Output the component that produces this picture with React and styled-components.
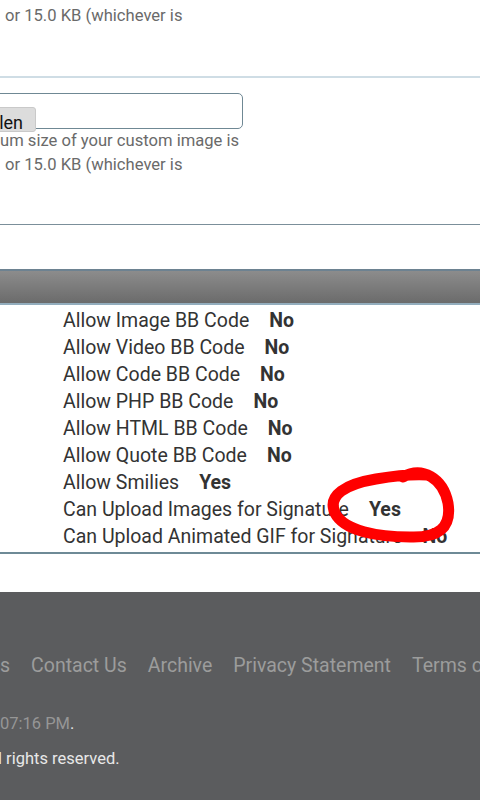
import React from "react";
import styled, { createGlobalStyle } from "styled-components";

const GlobalStyle = createGlobalStyle`
  html, body {
    margin: 0;
    padding: 0;
    background: #fff;
    overflow: hidden;
  }
  body {
    font-family: Roboto, "Liberation Sans", Arial, sans-serif;
    width: 480px;
    height: 800px;
  }
`;

const permissions = [
  ["Allow Image BB Code", "No"],
  ["Allow Video BB Code", "No"],
  ["Allow Code BB Code", "No"],
  ["Allow PHP BB Code", "No"],
  ["Allow HTML BB Code", "No"],
  ["Allow Quote BB Code", "No"],
  ["Allow Smilies", "Yes"],
  ["Can Upload Images for Signature", "Yes"],
  ["Can Upload Animated GIF for Signature", "No"],
];

const footerLinks = ["s", "Contact Us", "Archive", "Privacy Statement", "Terms of Service"];

export default function App() {
  return (
    <Page>
      <GlobalStyle />
      <Section $top $line="#cfdde5" $lineWidth={2}>
        <Hint $pull={-20}>
          <HintLine $indent={10}>um size of your profile image is</HintLine>
          <HintLine $indent={5}>or 15.0 KB (whichever is</HintLine>
        </Hint>
      </Section>

      <Section $line="#7b8f9a" $lineWidth={1}>
        <FileBox>
          <FileButton>Datei auswählen</FileButton>
        </FileBox>
        <Hint>
          <HintLine $indent={0}>um size of your custom image is</HintLine>
          <HintLine $indent={5}>or 15.0 KB (whichever is</HintLine>
        </Hint>
      </Section>

      <BarHeader />

      <PermList>
        {permissions.map(([label, value]) => (
          <PermRow key={label}>
            <PermLabel>{label}</PermLabel>
            <PermValue>{value}</PermValue>
          </PermRow>
        ))}
      </PermList>

      <Footer>
        <FooterLinks>
          {footerLinks.map((l) => (
            <FooterLink key={l}>{l}</FooterLink>
          ))}
        </FooterLinks>
        <FooterTime>
          07:16 PM<Dot>.</Dot>
        </FooterTime>
        <FooterCopy>l rights reserved.</FooterCopy>
      </Footer>

      <Scribble viewBox="0 0 480 800" width="480" height="800">
        <path
          d="M 403 477 C 422 466, 443 478, 448 503 C 452 528, 438 538, 410 537 C 378 537, 344 531, 335 513 C 327 495, 346 484, 376 479 C 394 476, 410 474, 427 475"
          fill="none"
          stroke="#ff0000"
          strokeWidth="11"
          strokeLinecap="round"
          strokeLinejoin="round"
        />
      </Scribble>
    </Page>
  );
}

const Page = styled.div`
  position: relative;
  width: 480px;
  height: 800px;
  overflow: hidden;
  background: #fff;
`;

const Section = styled.div`
  padding: ${(p) => (p.$top ? "0 0 48px" : "15px 0 47px")};
  border-bottom: ${(p) => p.$lineWidth}px solid ${(p) => p.$line};
`;

const Hint = styled.div`
  margin-top: ${(p) => p.$pull || 0}px;
  font-size: 16.6px;
  line-height: 24px;
  color: #6a6a6a;
`;

const HintLine = styled.div`
  white-space: nowrap;
  padding-left: ${(p) => p.$indent}px;
`;

const FileBox = styled.div`
  display: flex;
  box-sizing: border-box;
  height: 36px;
  width: 373px;
  margin-left: -130px;
  padding-top: 13px;
  border: 1px solid #6f8894;
  border-radius: 5px;
`;

const FileButton = styled.button`
  box-sizing: border-box;
  flex: none;
  width: 165px;
  height: 25px;
  padding: 4px 12px 0 0;
  text-align: right;
  font-family: Roboto, "Liberation Sans", Arial, sans-serif;
  font-size: 18px;
  line-height: 22px;
  color: #111;
  background: #dcdcdc;
  border: 1px solid #c9c9c9;
  border-radius: 3px;
  white-space: nowrap;
  overflow: hidden;
`;

const BarHeader = styled.div`
  margin-top: 44px;
  height: 32px;
  border-top: 2px solid #6d8291;
  border-bottom: 2px solid #93adbd;
  background: linear-gradient(#8c8c8c, #6b6b6b);
`;

const PermList = styled.div`
  padding: 2px 0 2px 63px;
  border-bottom: 2px solid #6e8a96;
`;

const PermRow = styled.div`
  display: flex;
  gap: 20px;
  font-size: 19.5px;
  line-height: 27px;
  color: #333;
  white-space: nowrap;
`;

const PermLabel = styled.span``;

const PermValue = styled.span`
  font-weight: bold;
`;

const Footer = styled.div`
  margin-top: 38px;
  height: 260px;
  padding-top: 60px;
  background: #5b5c5e;
`;

const FooterLinks = styled.div`
  display: flex;
  gap: 21px;
  font-size: 19.5px;
  line-height: 28px;
  white-space: nowrap;
`;

const FooterLink = styled.span`
  color: #9c9c9c;
`;

const FooterTime = styled.div`
  margin-top: 32px;
  font-size: 16.5px;
  line-height: 24px;
  color: #969696;
`;

const Dot = styled.span`
  color: #e6e6e6;
`;

const FooterCopy = styled.div`
  margin-top: 11px;
  margin-left: -2px;
  font-size: 16.5px;
  line-height: 24px;
  color: #e8e8e8;
`;

const Scribble = styled.svg`
  position: absolute;
  top: 0;
  left: 0;
  pointer-events: none;
`;
